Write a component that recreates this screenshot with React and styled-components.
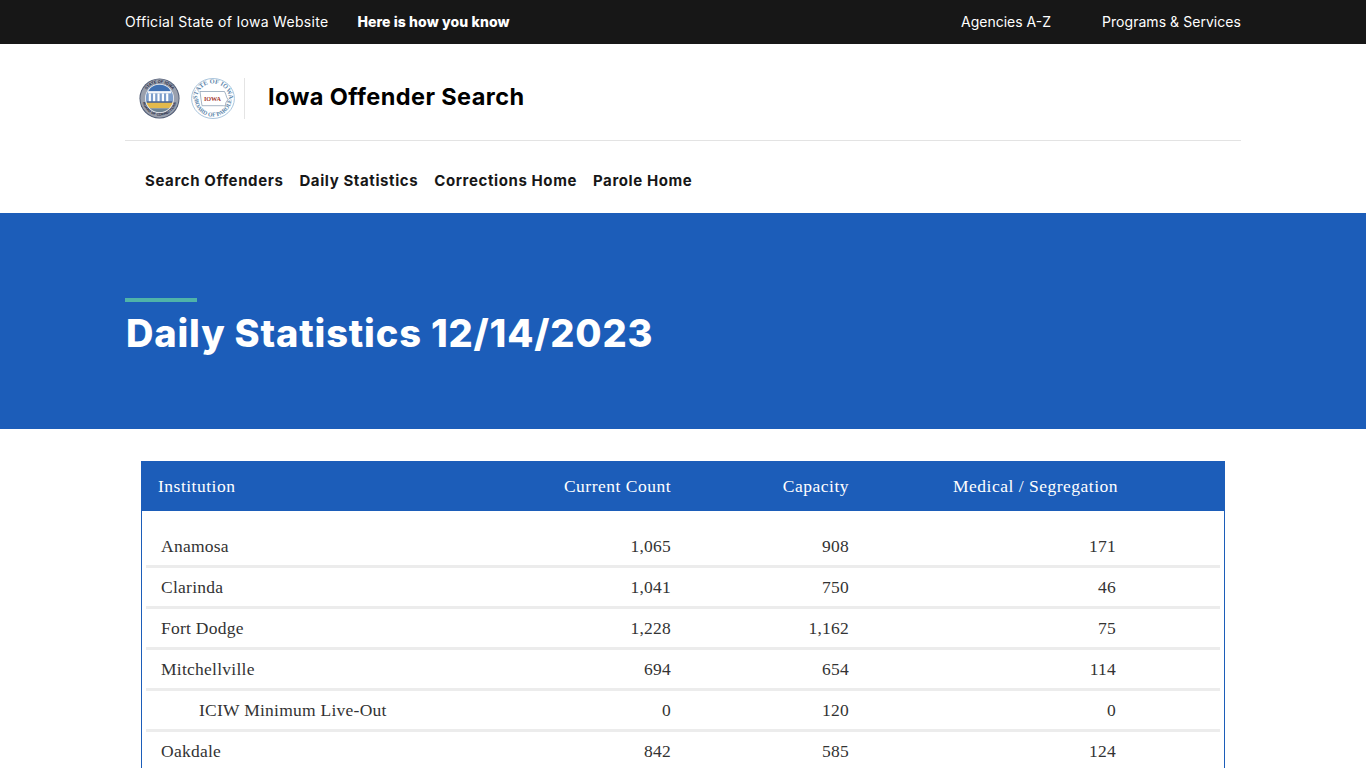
import React from "react";
import styled, { createGlobalStyle } from "styled-components";

const Global = createGlobalStyle`
  html, body { margin: 0; padding: 0; background: #fff; }
  html { overflow: hidden; height: 768px; }
  body { height: 768px; overflow: hidden; font-family: Inter, "Liberation Sans", sans-serif; }
`;
const Wrap = styled.div`width: 1366px;`;
const TopBar = styled.div`
  height: 44px; background: #171717; color: #fff; box-sizing: border-box; padding: 0 125px 1px;
  display: flex; align-items: center; justify-content: space-between; font-size: 14px;
`;
const TopGroup = styled.div`display: flex; align-items: center; gap: ${p => p.$gap}px;`;
const TopText = styled.span`
  font-weight: ${p => (p.$bold ? 800 : 400)}; letter-spacing: ${p => p.$ls || 0}px; white-space: nowrap;
`;
const Shell = styled.div`width: 1116px; margin: 0 auto;`;
const Brand = styled.div`
  height: 97px; box-sizing: border-box; border-bottom: 1px solid #e3e3e3;
  display: flex; align-items: center; padding: 13px 0 0 14px;
`;
const Seals = styled.div`
  display: flex; align-items: center; gap: 11px; height: 41px; padding-right: 9px; border-right: 1px solid #e4e4e4;
`;
const SiteName = styled.div`
  margin: 0 0 5px 23px; font-size: 23.5px; font-weight: 700; color: #000; letter-spacing: 0.4px; white-space: nowrap;
`;
const Nav = styled.nav`
  height: 72px; box-sizing: border-box; padding: 7px 0 0 20px; display: flex; align-items: center; gap: 16px;
`;
const NavLink = styled.a`font-size: 15px; font-weight: 700; color: #171717; letter-spacing: 0.6px; white-space: nowrap;`;
const Hero = styled.header`
  height: 216px; background: #1c5db9; box-sizing: border-box; padding: 85px 125px 0;
`;
const Accent = styled.div`width: 72px; height: 4px; background: #4fb3a9;`;
const Title = styled.h1`
  margin: 9px 0 0 1px; font-size: 38px; line-height: 44px; font-weight: 800; color: #fff; letter-spacing: 0.83px; white-space: nowrap;
`;
const Main = styled.main`padding: 32px 141px 0;`;
const Card = styled.section`width: 1084px; box-sizing: border-box; border: 1px solid #1c5db9;`;
const HeadRow = styled.div`
  height: 49px; margin: 0 -1px; background: #1c5db9; color: #fff; padding-left: 17px;
  display: grid; grid-template-columns: 333px 180px 178px 269px; align-items: center;
  font-family: "Liberation Serif", serif; font-size: 17.5px; letter-spacing: 0.5px;
`;
const Body = styled.div`padding: 16px 4px 0;`;
const Row = styled.div`
  height: 38px; padding-left: 15px; border-bottom: 3px solid #ececec;
  display: grid; grid-template-columns: 330px 180px 178px 267px; align-items: center;
  font-family: "Liberation Serif", serif; font-size: 17.5px; letter-spacing: 0.25px; color: #333;
`;
const Name = styled.div`padding-left: ${p => (p.$sub ? 38 : 0)}px; white-space: nowrap;`;
const Num = styled.div`text-align: right;`;

const rows = [
  ["Anamosa", "1,065", "908", "171"],
  ["Clarinda", "1,041", "750", "46"],
  ["Fort Dodge", "1,228", "1,162", "75"],
  ["Mitchellville", "694", "654", "114"],
  ["ICIW Minimum Live-Out", "0", "120", "0", true],
  ["Oakdale", "842", "585", "124"],
];

const CorrectionsSeal = () => (
  <svg width="41" height="41" viewBox="0 0 42 42">
    <defs>
      <path id="cTop" d="M5 21a16 16 0 0 1 32 0" />
      <path id="cBot" d="M3.4 21a17.6 17.6 0 0 0 35.2 0" />
      <clipPath id="cIn"><circle cx="21" cy="21" r="14" /></clipPath>
    </defs>
    <circle cx="21" cy="21" r="20.5" fill="#4a5670" />
    <circle cx="21" cy="21" r="19.6" fill="#9aa0ad" />
    <text fontFamily="Liberation Sans, sans-serif" fontSize="4" fontWeight="700" fill="#1c2540">
      <textPath href="#cTop" startOffset="50%" textAnchor="middle">STATE OF IOWA</textPath>
    </text>
    <text fontFamily="Liberation Sans, sans-serif" fontSize="3.6" fontWeight="700" fill="#1c2540">
      <textPath href="#cBot" startOffset="50%" textAnchor="middle">BOARD OF CORRECTIONS</textPath>
    </text>
    <circle cx="21" cy="21" r="14.8" fill="#f1f3f7" />
    <g clipPath="url(#cIn)">
      <rect x="5" y="5" width="32" height="13" fill="#8fb5de" />
      <path d="M10 13.500a11 7.500 0 0 1 22 0z" fill="#3f70b2" />
      <rect x="5" y="14" width="32" height="11" fill="#7d9ecb" />
      <rect x="5" y="25" width="32" height="6" fill="#e3b94c" />
      <rect x="5" y="31" width="32" height="6" fill="#6f8494" />
      <rect x="9" y="13.500" width="24" height="2.200" fill="#f6f7fa" />
      <path d="M10 16h2.200v8H10zM14.400 16h2.200v8h-2.200zM18.900 16h2.200v8h-2.200zM23.400 16h2.200v8h-2.200zM27.800 16H30v8h-2.200z" fill="#fff" />
      <rect x="8" y="24" width="26" height="1.300" fill="#3a5180" />
    </g>
  </svg>
);
const ParoleSeal = () => (
  <svg width="44" height="41" viewBox="0 0 44 41">
    <defs>
      <path id="pTop" d="M6 21a16 15.500 0 0 1 32 0" />
      <path id="pBot" d="M3.500 21a18.500 17.500 0 0 0 37 0" />
    </defs>
    <ellipse cx="22" cy="20.500" rx="21.400" ry="20" fill="#fff" stroke="#9fbdd8" strokeWidth=".9" />
    <text fontFamily="Liberation Serif, serif" fontSize="6.400" fontWeight="700" fill="#5e86ab">
      <textPath href="#pTop" startOffset="50%" textAnchor="middle">STATE OF IOWA</textPath>
    </text>
    <text fontFamily="Liberation Serif, serif" fontSize="5.800" fontWeight="700" fill="#5e86ab">
      <textPath href="#pBot" startOffset="50%" textAnchor="middle">BOARD OF PAROLE</textPath>
    </text>
    <path d="M9 13.500h24.500l1.200 2.600 1 3.200 1.200 2.200-2 3.200-.6 3.300-1.800-.3H11l-1-6.500z" fill="#fff" stroke="#7f95ab" strokeWidth=".7" />
    <text x="21.500" y="23" textAnchor="middle" fontFamily="Liberation Serif, serif" fontSize="6.200" fontWeight="700" fill="#a3382f">IOWA</text>
  </svg>
);

export default function App() {
  return (
    <Wrap>
      <Global />
      <TopBar>
        <TopGroup $gap={29}>
          <TopText $ls={0.3}>Official State of Iowa Website</TopText>
          <TopText $bold $ls={0.1}>Here is how you know</TopText>
        </TopGroup>
        <TopGroup $gap={51}>
          <TopText>Agencies A-Z</TopText>
          <TopText $ls={0.05}>Programs &amp; Services</TopText>
        </TopGroup>
      </TopBar>
      <Shell>
        <Brand>
          <Seals><CorrectionsSeal /><ParoleSeal /></Seals>
          <SiteName>Iowa Offender Search</SiteName>
        </Brand>
        <Nav>
          <NavLink>Search Offenders</NavLink>
          <NavLink>Daily Statistics</NavLink>
          <NavLink>Corrections Home</NavLink>
          <NavLink>Parole Home</NavLink>
        </Nav>
      </Shell>
      <Hero>
        <Accent />
        <Title>Daily Statistics 12/14/2023</Title>
      </Hero>
      <Main>
        <Card>
          <HeadRow>
            <div>Institution</div>
            <Num>Current Count</Num>
            <Num>Capacity</Num>
            <Num>Medical / Segregation</Num>
          </HeadRow>
          <Body>
            {rows.map(r => (
              <Row key={r[0]}>
                <Name $sub={r[4]}>{r[0]}</Name>
                <Num>{r[1]}</Num>
                <Num>{r[2]}</Num>
                <Num>{r[3]}</Num>
              </Row>
            ))}
          </Body>
        </Card>
      </Main>
    </Wrap>
  );
}
